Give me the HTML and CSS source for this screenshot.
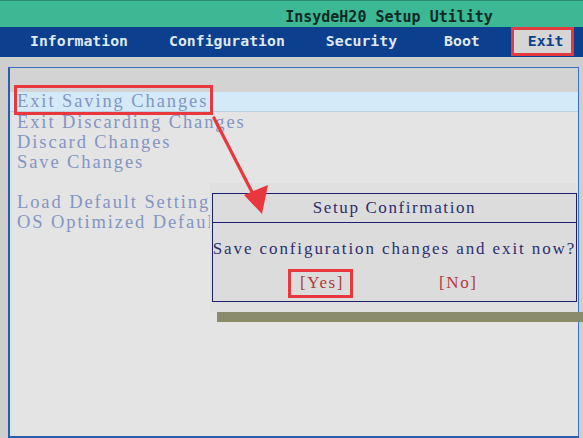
FILE: index.html
```html
<!DOCTYPE html>
<html>
<head>
<meta charset="utf-8">
<link rel="stylesheet" href="styles.css">
</head>
<body>
<div class="screen">
  <header class="titlebar"><span class="title">InsydeH20 Setup Utility</span></header>
  <nav class="nav">
    <span class="tab t-info">Information</span>
    <span class="tab t-config">Configuration</span>
    <span class="tab t-sec">Security</span>
    <span class="tab t-boot">Boot</span>
    <span class="tab t-exit">Exit</span>
  </nav>
  <main class="main">
    <section class="panel">
      <div class="panel-top"></div>
      <ul class="menu">
        <li class="item selected">Exit Saving Changes</li>
        <li class="item">Exit Discarding Changes</li>
        <li class="item">Discard Changes</li>
        <li class="item">Save Changes</li>
        <li class="item blank">&nbsp;</li>
        <li class="item">Load Default Settings</li>
        <li class="item">OS Optimized Defaults</li>
      </ul>
    </section>
  </main>

  <div class="mark mark-item"></div>

  <div class="dialog-wrap">
    <div class="dialog">
      <div class="dialog-title">Setup Confirmation</div>
      <div class="dialog-msg">Save configuration changes and exit now?</div>
      <div class="dialog-btns">
        <span class="btn btn-yes">[Yes]</span>
        <span class="btn btn-no">[No]</span>
      </div>
    </div>
  </div>
  <div class="dialog-shadow"></div>
  <div class="mark mark-yes"></div>

  <svg class="arrow" width="583" height="438" viewBox="0 0 583 438">
    <line x1="214" y1="118" x2="254" y2="196" stroke="#e8383d" stroke-width="3.2" stroke-linecap="round"/>
    <polygon points="244,195 268,185 262,214" fill="#e8383d"/>
  </svg>
</div>
</body>
</html>
```
FILE: styles.css
```css
* { box-sizing: border-box; margin: 0; padding: 0; }
html, body { width: 583px; height: 438px; overflow: hidden; }
body { background: #cecece; }
.screen { position: relative; width: 583px; height: 438px; }

.titlebar {
  height: 27px;
  background: #3cb894;
  border-top: 1px solid #2c8a74;
  display: flex;
  justify-content: center;
  align-items: center;
  padding-left: 195px;
  padding-top: 5px;
}
.title {
  font-family: "DejaVu Sans Mono", monospace;
  font-weight: bold;
  font-size: 15px;
  color: #0f2a24;
  white-space: nowrap;
}

.nav {
  height: 30px;
  background: #0c3f8e;
  display: flex;
  align-items: center;
  font-family: "DejaVu Sans Mono", monospace;
  font-weight: bold;
  font-size: 14.8px;
  color: #dfe8f2;
}
.tab { white-space: nowrap; }
.t-info { margin-left: 30px; margin-top: -3px; }
.t-config { margin-left: 41px; margin-top: -3px; }
.t-sec { margin-left: 41px; margin-top: -3px; }
.t-boot { margin-left: 47px; margin-top: -3px; }
.t-exit {
  margin-left: 31px;
  width: 63px;
  height: 29px;
  align-self: flex-start;
  background: #d6d6d6;
  border: 3px solid #e23a3f;
  color: #0c3f8e;
  padding-left: 14px;
  line-height: 22px;
}

.main {
  padding: 10px 5px 0 8px;
  height: 381px;
}
.panel {
  width: 571px;
  height: 371px;
  border: 1px solid #3a70c0;
  border-left: 2px solid #2a5ea8;
  border-bottom: 2px solid #2a5ea8;
  background: #e4e4e4;
  box-shadow: inset 2px 0 0 #d2e6f8;
}
.panel-top {
  height: 24px;
  background: #d3d3d3;
}
.menu {
  list-style: none;
  font-family: "Liberation Serif", "DejaVu Serif", serif;
  font-size: 18.5px;
  letter-spacing: 1.9px;
  color: #8395c2;
}
.item {
  height: 20px;
  line-height: 20px;
  padding-left: 7px;
  white-space: nowrap;
}
.item.selected {
  background: #d5eaf9;
  border-bottom: 1px solid #bcd0e0;
  height: 20px;
  line-height: 19px;
}

.mark {
  position: absolute;
  border: 3px solid #e8383d;
}
.mark-item { left: 14px; top: 85px; width: 199px; height: 30px; }
.mark-yes { left: 288px; top: 269px; width: 65px; height: 29px; }

.dialog-wrap {
  position: absolute;
  left: 210px;
  top: 183px;
  width: 368px;
  height: 129px;
  background: #e0e0e0;
  padding: 10px 1px 0 2px;
}
.dialog {
  width: 365px;
  height: 109px;
  border: 1px solid #1c1f6c;
  background: #dcdcdc;
  font-family: "Liberation Serif", "DejaVu Serif", serif;
  font-size: 17px;
  letter-spacing: 1.6px;
  color: #2c2f6e;
  display: flex;
  flex-direction: column;
}
.dialog-title {
  height: 29px;
  border-bottom: 1px solid #1c1f6c;
  text-align: center;
  line-height: 28px;
}
.dialog-msg {
  text-align: center;
  margin-top: 16px;
  line-height: 20px;
  white-space: nowrap;
  letter-spacing: 1.9px;
  margin-left: -4px;
  margin-right: -4px;
}
.dialog-btns {
  display: flex;
  margin-top: 14px;
  line-height: 20px;
  color: #b03a3c;
}
.btn-yes { margin-left: 87px; }
.btn-no { margin-left: 95px; }

.dialog-shadow {
  position: absolute;
  left: 217px;
  top: 312px;
  width: 366px;
  height: 10px;
  background: #8a8a6c;
}

.arrow { position: absolute; left: 0; top: 0; pointer-events: none; }
```
